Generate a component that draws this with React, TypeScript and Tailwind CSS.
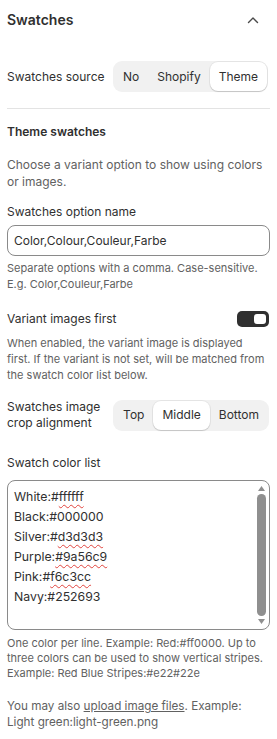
import React from "react";

function Segmented({ options, selected }: { options: string[]; selected: string }) {
  return (
    <div className="flex items-center h-[31px] rounded-[9px] bg-[#f1f1f1] p-[1px] shrink-0">
      {options.map((o) => (
        <div
          key={o}
          className={
            o === selected
              ? "h-full flex items-center px-[9px] rounded-[8px] bg-white shadow-[0_1px_1px_rgba(0,0,0,0.14),0_0_0_1px_rgba(0,0,0,0.05)] text-[#303030]"
              : "h-full flex items-center px-[9px] text-[#303030]"
          }
        >
          {o}
        </div>
      ))}
    </div>
  );
}

const Squig = ({ children }: { children: React.ReactNode }) => (
  <span className="underline decoration-wavy decoration-[#e0443e] decoration-[1px] underline-offset-[3px]">{children}</span>
);

export default function App() {
  return (
    <div className="w-[277px] min-h-[739px] bg-white px-[7px] font-['Inter',sans-serif] text-[12px] leading-[20px] text-[#303030]">
      <div className="flex items-center justify-between h-[40px]">
        <div className="text-[14px] font-semibold text-[#303030]">Swatches</div>
        <svg width="12" height="8" viewBox="0 0 12 8" className="mr-[11px]">
          <path d="M1.5 6.5 L6 2 L10.5 6.5" fill="none" stroke="#4a4a4a" strokeWidth="1.4" strokeLinecap="round" strokeLinejoin="round" />
        </svg>
      </div>

      <div className="mt-[21px] flex items-center justify-between">
        <div className="whitespace-nowrap">Swatches source</div>
        <div className="mr-[2px]">
          <Segmented options={["No", "Shopify", "Theme"]} selected="Theme" />
        </div>
      </div>

      <div className="mt-[16px] h-px bg-[#e3e3e3]" />

      <div className="mt-[13px] font-semibold">Theme swatches</div>

      <div className="mt-[14px] leading-[17px] text-[#616161]">
        Choose a variant option to show using colors or images.
      </div>

      <div className="mt-[12px]">Swatches option name</div>
      <div className="mt-[3px] h-[31px] rounded-[8px] border border-[#8a8a8a] flex items-center px-[6px]">
        Color,Colour,Couleur,Farbe
      </div>
      <div className="mt-[4px] text-[11px] leading-[16px] text-[#616161]">
        Separate options with a comma. Case-sensitive. E.g. Color,Couleur,Farbe
      </div>

      <div className="mt-[17px] flex items-center justify-between">
        <div>Variant images first</div>
        <div className="w-[32px] h-[16px] rounded-[5px] bg-[#303030] flex items-center justify-end p-[3px] mr-[1px]">
          <div className="w-[12px] h-[10px] rounded-[3px] bg-white" />
        </div>
      </div>
      <div className="mt-[6px] pr-[3px] text-[11px] leading-[16px] text-[#616161]">
        When enabled, the variant image is displayed first. If the variant is not set, will be matched from the swatch color list below.
      </div>

      <div className="mt-[16px] flex items-center justify-between">
        <div className="w-[100px] leading-[16px]">Swatches image crop alignment</div>
        <div className="mr-[1px]">
          <Segmented options={["Top", "Middle", "Bottom"]} selected="Middle" />
        </div>
      </div>

      <div className="mt-[22px]">Swatch color list</div>
      <div className="relative mt-[7px] h-[150px] rounded-[8px] border border-[#8a8a8a] pl-[6px] pt-[6px] leading-[20px] text-[12.3px]">
        <div>White:#<Squig>ffffff</Squig></div>
        <div>Black:#000000</div>
        <div>Silver:#<Squig>d3d3d3</Squig></div>
        <div>Purple:<Squig>#9a56c9</Squig></div>
        <div>Pink:#<Squig>f6c3cc</Squig></div>
        <div>Navy:#252693</div>
        <div className="absolute right-[2px] top-[2px] bottom-[2px] w-[11px] flex flex-col items-center">
          <svg width="9" height="7" viewBox="0 0 9 7" className="mt-[2px]">
            <path d="M4.5 1 L8 6 L1 6 Z" fill="#8f8f8f" />
          </svg>
          <div className="flex-1 w-[9px] my-[2px] rounded-full bg-[#8f8f8f]" />
          <svg width="9" height="7" viewBox="0 0 9 7" className="mb-[2px]">
            <path d="M1 1 L8 1 L4.5 6 Z" fill="#8f8f8f" />
          </svg>
        </div>
      </div>
      <div className="mt-[6px] text-[11px] leading-[15px] text-[#616161]">
        One color per line. Example: Red:#ff0000. Up to three colors can be used to show vertical stripes. Example: Red Blue Stripes:#e22#22e
      </div>

      <div className="mt-[17px] text-[11.7px] leading-[16px] text-[#616161]">
        You may also <span className="underline">upload image files</span>. Example: Light green:light-green.png
      </div>
    </div>
  );
}
